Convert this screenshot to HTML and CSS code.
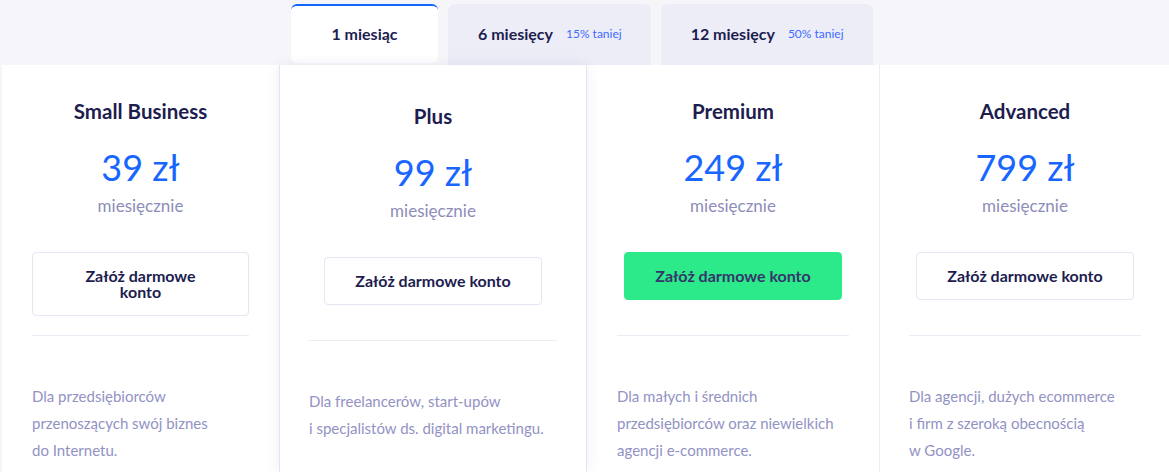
FILE: index.html
```html
<!DOCTYPE html>
<html lang="pl">
<head>
<meta charset="utf-8">
<title>Cennik</title>
<link rel="stylesheet" href="styles.css">
</head>
<body>
<div class="page">
  <div class="tabs">
    <div class="tab tab-active">1 miesiąc</div>
    <div class="tab">6 miesięcy <span class="save">15% taniej</span></div>
    <div class="tab">12 miesięcy <span class="save">50% taniej</span></div>
  </div>
  <div class="plans">
    <div class="plan plan-first">
      <div class="plan-name">Small Business</div>
      <div class="plan-price">39 zł</div>
      <div class="plan-period">miesięcznie</div>
      <div class="btn-wrap"><a class="btn">Załóż darmowe konto</a></div>
      <div class="divider"></div>
      <p class="desc">Dla przedsiębiorców<br>przenoszących swój biznes<br>do Internetu.</p>
    </div>
    <div class="plan plan-featured">
      <div class="plan-name">Plus</div>
      <div class="plan-price">99 zł</div>
      <div class="plan-period">miesięcznie</div>
      <div class="btn-wrap"><a class="btn">Załóż darmowe konto</a></div>
      <div class="divider"></div>
      <p class="desc">Dla freelancerów, start-upów<br>i specjalistów ds. digital marketingu.</p>
    </div>
    <div class="plan">
      <div class="plan-name">Premium</div>
      <div class="plan-price">249 zł</div>
      <div class="plan-period">miesięcznie</div>
      <div class="btn-wrap"><a class="btn btn-green">Załóż darmowe konto</a></div>
      <div class="divider"></div>
      <p class="desc">Dla małych i średnich<br>przedsiębiorców oraz niewielkich<br>agencji e-commerce.</p>
    </div>
    <div class="plan plan-last">
      <div class="plan-name">Advanced</div>
      <div class="plan-price">799 zł</div>
      <div class="plan-period">miesięcznie</div>
      <div class="btn-wrap"><a class="btn">Załóż darmowe konto</a></div>
      <div class="divider"></div>
      <p class="desc">Dla agencji, dużych ecommerce<br>i firm z szeroką obecnością<br>w Google.</p>
    </div>
  </div>
</div>
</body>
</html>
```
FILE: styles.css
```css
html, body {
  margin: 0;
  padding: 0;
}
body {
  background: #f6f6fa;
  font-family: Lato, "Open Sans", "Liberation Sans", sans-serif;
  overflow: hidden;
  width: 1169px;
  height: 472px;
}
.tabs {
  display: flex;
  align-items: flex-start;
  gap: 10px;
  padding: 4px 0 0 291px;
  height: 61px;
}
.tab {
  box-sizing: border-box;
  height: 61px;
  display: flex;
  align-items: center;
  justify-content: center;
  gap: 13px;
  padding: 0 29px 2px 30px;
  background: #ededf8;
  border-radius: 7px 7px 0 0;
  font-size: 16px;
  font-weight: 700;
  color: #1d1d4f;
}
.tab-active {
  width: 147px;
  height: 59px;
  padding: 0 0 2px;
  background: #fff;
  border-top: 2px solid #1565ff;
  border-radius: 6px;
}
.save {
  font-size: 12px;
  font-weight: 400;
  color: #3d6bff;
}
.plans {
  display: grid;
  grid-template-columns: 277px 308px 292px 292px;
  margin-left: 2px;
  height: 407px;
}
.plan {
  box-sizing: border-box;
  background: #fff;
  padding: 32px 30px 0;
  display: flex;
  flex-direction: column;
  align-items: center;
}
.plan-featured {
  position: relative;
  z-index: 1;
  padding: 37px 29px 0;
  border-left: 1px solid #e3e3f6;
  border-right: 1px solid #e3e3f6;
  box-shadow: 0 0 14px rgba(30, 30, 100, 0.07);
}
.plan-last {
  border-left: 1px solid #ececf5;
  padding-left: 29px;
}
.plan-name {
  font-size: 20.5px;
  line-height: 28px;
  font-weight: 700;
  color: #1d1d4f;
}
.plan-price {
  margin-top: 20px;
  font-size: 36px;
  line-height: 44px;
  font-weight: 400;
  color: #1866ff;
}
.plan-period {
  margin-top: 5px;
  font-size: 17px;
  line-height: 24px;
  color: #8d8db9;
}
.btn-wrap {
  margin-top: 34px;
  height: 64px;
  width: 100%;
  display: flex;
  justify-content: center;
  align-items: flex-start;
}
.btn {
  box-sizing: border-box;
  max-width: 100%;
  padding: 15px 30px;
  border: 1px solid #e5e5f4;
  border-radius: 4px;
  background: #fff;
  font-size: 16px;
  line-height: 16px;
  font-weight: 700;
  color: #1d1d4f;
  text-align: center;
}
.btn-green {
  background: #2ce98a;
  border-color: #2ce98a;
  color: #35356a;
}
.divider {
  width: 100%;
  height: 1px;
  margin-top: 19px;
  background: #ececf5;
}
.desc {
  align-self: stretch;
  margin: 47px 0 0;
  font-size: 15px;
  line-height: 27px;
  color: #9292c4;
}
```
